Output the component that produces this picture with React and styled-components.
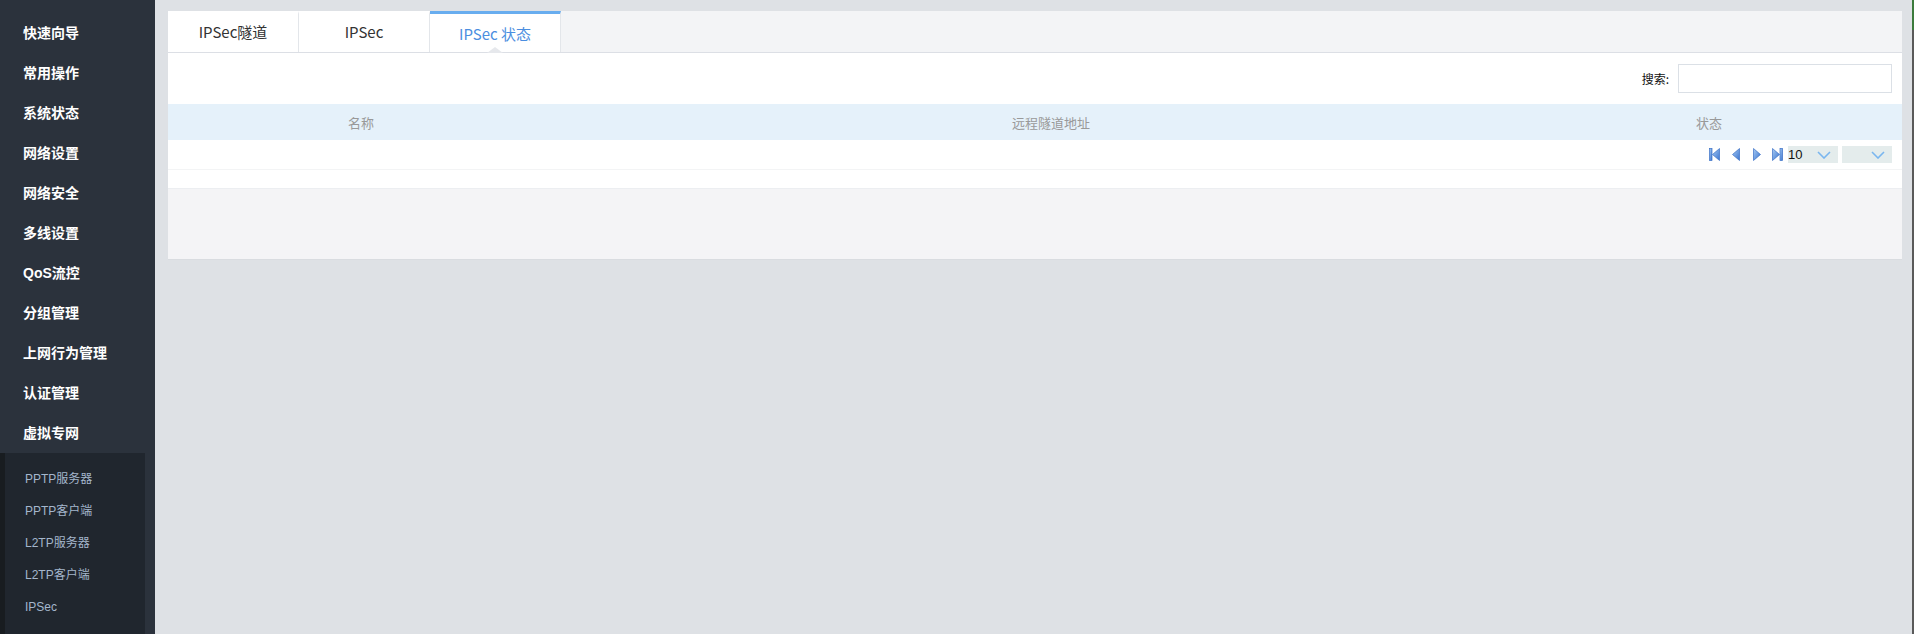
import React from "react";
import styled, { createGlobalStyle } from "styled-components";

const Global = createGlobalStyle`
  html, body { margin: 0; padding: 0; height: 634px; overflow: hidden; }
  body { font-family: "Noto Sans CJK SC", "Microsoft YaHei", sans-serif; background: #dee1e5; }
  #root { height: 634px; }
`;

const Page = styled.div`
  display: flex;
  height: 634px;
`;

const Sidebar = styled.nav`
  width: 155px;
  flex-shrink: 0;
  background: #2b323c;
  padding-top: 13px;
  box-sizing: border-box;
  display: flex;
  flex-direction: column;
`;

const MenuItem = styled.div`
  height: 40px;
  line-height: 40px;
  padding-left: 23px;
  color: #ffffff;
  font-size: 14px;
  font-weight: bold;
  font-family: "Liberation Sans", "Noto Sans CJK SC", sans-serif;
`;

const SubMenu = styled.div`
  width: 145px;
  flex: 1;
  background: #20262e;
  border-left: 5px solid #181c20;
  box-sizing: border-box;
  padding-top: 10px;
`;

const SubItem = styled.div`
  height: 32px;
  line-height: 32px;
  padding-left: 20px;
  color: #a4b6cc;
  font-size: 12px;
  font-family: "Liberation Sans", "Noto Sans CJK SC", sans-serif;
`;

const Main = styled.main`
  flex: 1;
  padding: 11px 10px 0 13px;
  box-sizing: border-box;
`;

const EdgeStrip = styled.div`
  width: 2px;
  flex-shrink: 0;
  background: linear-gradient(#3c7b3c 0, #3c7b3c 30px, #5a5a5a 30px);
`;

const Card = styled.section`
  background: #ffffff;
  display: flex;
  flex-direction: column;
`;

const TabBar = styled.div`
  display: flex;
  height: 42px;
  background: #f3f4f6;
  border-bottom: 1px solid #dcdfe5;
  box-sizing: border-box;
`;

const Tab = styled.div`
  position: relative;
  width: 131px;
  box-sizing: border-box;
  background: #ffffff;
  border-right: 1px solid #e3e6ea;
  border-top: 3px solid ${p => (p.$active ? "#68adef" : "#ffffff")};
  color: ${p => (p.$active ? "#4b8ee0" : "#333333")};
  font-size: 15px;
  display: flex;
  align-items: center;
  justify-content: center;
  padding-bottom: ${p => (p.$active ? "0" : "3px")};
  ${p =>
    p.$active &&
    `
    &::after {
      content: "";
      position: absolute;
      left: 50%;
      bottom: -1px;
      margin-left: -8px;
      border-left: 8px solid transparent;
      border-right: 8px solid transparent;
      border-bottom: 6px solid #e6e8ec;
    }
  `}
`;

const Toolbar = styled.div`
  height: 51px;
  display: flex;
  align-items: center;
  justify-content: flex-end;
  padding-right: 10px;
  gap: 9px;
`;

const SearchLabel = styled.label`
  font-size: 12px;
  font-weight: normal;
  color: #111;
`;

const SearchInput = styled.input`
  width: 214px;
  height: 29px;
  box-sizing: border-box;
  border: 1px solid #dbe0e6;
  outline: none;
  background: #fff;
`;

const HeadRow = styled.div`
  display: grid;
  grid-template-columns: 386px 994px 322px 1fr;
  height: 36px;
  background: #e5f1fa;
  align-items: center;
`;

const HeadCell = styled.div`
  text-align: center;
  color: #999999;
  font-size: 13px;
`;

const PagerRow = styled.div`
  height: 29px;
  border-bottom: 1px solid #f3f4f5;
  display: flex;
  align-items: center;
  justify-content: flex-end;
  padding-right: 10px;
`;

const PagerButton = styled.span`
  display: inline-flex;
  width: 21px;
  justify-content: center;
  align-items: center;
`;

const Select = styled.div`
  width: 50px;
  height: 17px;
  background: #e4ecec;
  display: flex;
  align-items: center;
  justify-content: space-between;
  box-sizing: border-box;
  padding: 0 7px 0 0;
  margin-left: ${p => p.$ml || 0}px;
  font-family: "Liberation Sans", sans-serif;
  font-size: 13px;
  color: #111;
`;

const Spacer = styled.div`
  height: 18px;
  background: #ffffff;
`;

const Footer = styled.div`
  height: 72px;
  background: #f4f4f6;
  border-top: 1px solid #eceef1;
  border-bottom: 1px solid #d9dce0;
  box-sizing: border-box;
`;

const Chevron = () => (
  <svg width="14" height="8" viewBox="0 0 14 8">
    <path d="M1 1 L7 7 L13 1" fill="none" stroke="#7ab6ef" strokeWidth="1.6" />
  </svg>
);

const PagerIcon = ({ kind }) => {
  const gid = `g-${kind}`;
  const grad = (
    <defs>
      <linearGradient id={gid} x1="0" y1="0" x2="1" y2="1">
        <stop offset="0" stopColor="#a7cbf4" />
        <stop offset="1" stopColor="#3a74cf" />
      </linearGradient>
    </defs>
  );
  const stroke = "#3a6fc6";
  if (kind === "first")
    return (
      <svg width="11" height="13" viewBox="0 0 11 13">
        {grad}
        <rect x="0.5" y="0.5" width="2.5" height="12" fill={`url(#${gid})`} stroke={stroke} strokeWidth="0.7" />
        <path d="M10.5 0.5 L3.5 6.5 L10.5 12.5 Z" fill={`url(#${gid})`} stroke={stroke} strokeWidth="0.7" />
      </svg>
    );
  if (kind === "prev")
    return (
      <svg width="8" height="13" viewBox="0 0 8 13">
        {grad}
        <path d="M7.5 0.5 L0.5 6.5 L7.5 12.5 Z" fill={`url(#${gid})`} stroke={stroke} strokeWidth="0.7" />
      </svg>
    );
  if (kind === "next")
    return (
      <svg width="8" height="13" viewBox="0 0 8 13">
        {grad}
        <path d="M0.5 0.5 L7.5 6.5 L0.5 12.5 Z" fill={`url(#${gid})`} stroke={stroke} strokeWidth="0.7" />
      </svg>
    );
  return (
    <svg width="11" height="13" viewBox="0 0 11 13">
      {grad}
      <path d="M0.5 0.5 L7.5 6.5 L0.5 12.5 Z" fill={`url(#${gid})`} stroke={stroke} strokeWidth="0.7" />
      <rect x="8" y="0.5" width="2.5" height="12" fill={`url(#${gid})`} stroke={stroke} strokeWidth="0.7" />
    </svg>
  );
};

const menu = ["快速向导", "常用操作", "系统状态", "网络设置", "网络安全", "多线设置", "QoS流控", "分组管理", "上网行为管理", "认证管理", "虚拟专网"];
const sub = ["PPTP服务器", "PPTP客户端", "L2TP服务器", "L2TP客户端", "IPSec"];

export default function App() {
  return (
    <Page>
      <Global />
      <Sidebar>
        {menu.map(m => (
          <MenuItem key={m}>{m}</MenuItem>
        ))}
        <SubMenu>
          {sub.map(s => (
            <SubItem key={s}>{s}</SubItem>
          ))}
        </SubMenu>
      </Sidebar>
      <Main>
        <Card>
          <TabBar>
            <Tab>IPSec隧道</Tab>
            <Tab>IPSec</Tab>
            <Tab $active>IPSec 状态</Tab>
          </TabBar>
          <Toolbar>
            <SearchLabel>搜索:</SearchLabel>
            <SearchInput />
          </Toolbar>
          <HeadRow>
            <HeadCell>名称</HeadCell>
            <HeadCell>远程隧道地址</HeadCell>
            <HeadCell>状态</HeadCell>
            <div />
          </HeadRow>
          <PagerRow>
            <PagerButton><PagerIcon kind="first" /></PagerButton>
            <PagerButton><PagerIcon kind="prev" /></PagerButton>
            <PagerButton><PagerIcon kind="next" /></PagerButton>
            <PagerButton><PagerIcon kind="last" /></PagerButton>
            <Select>10<Chevron /></Select>
            <Select $ml={4}><span /><Chevron /></Select>
          </PagerRow>
          <Spacer />
          <Footer />
        </Card>
      </Main>
      <EdgeStrip />
    </Page>
  );
}
